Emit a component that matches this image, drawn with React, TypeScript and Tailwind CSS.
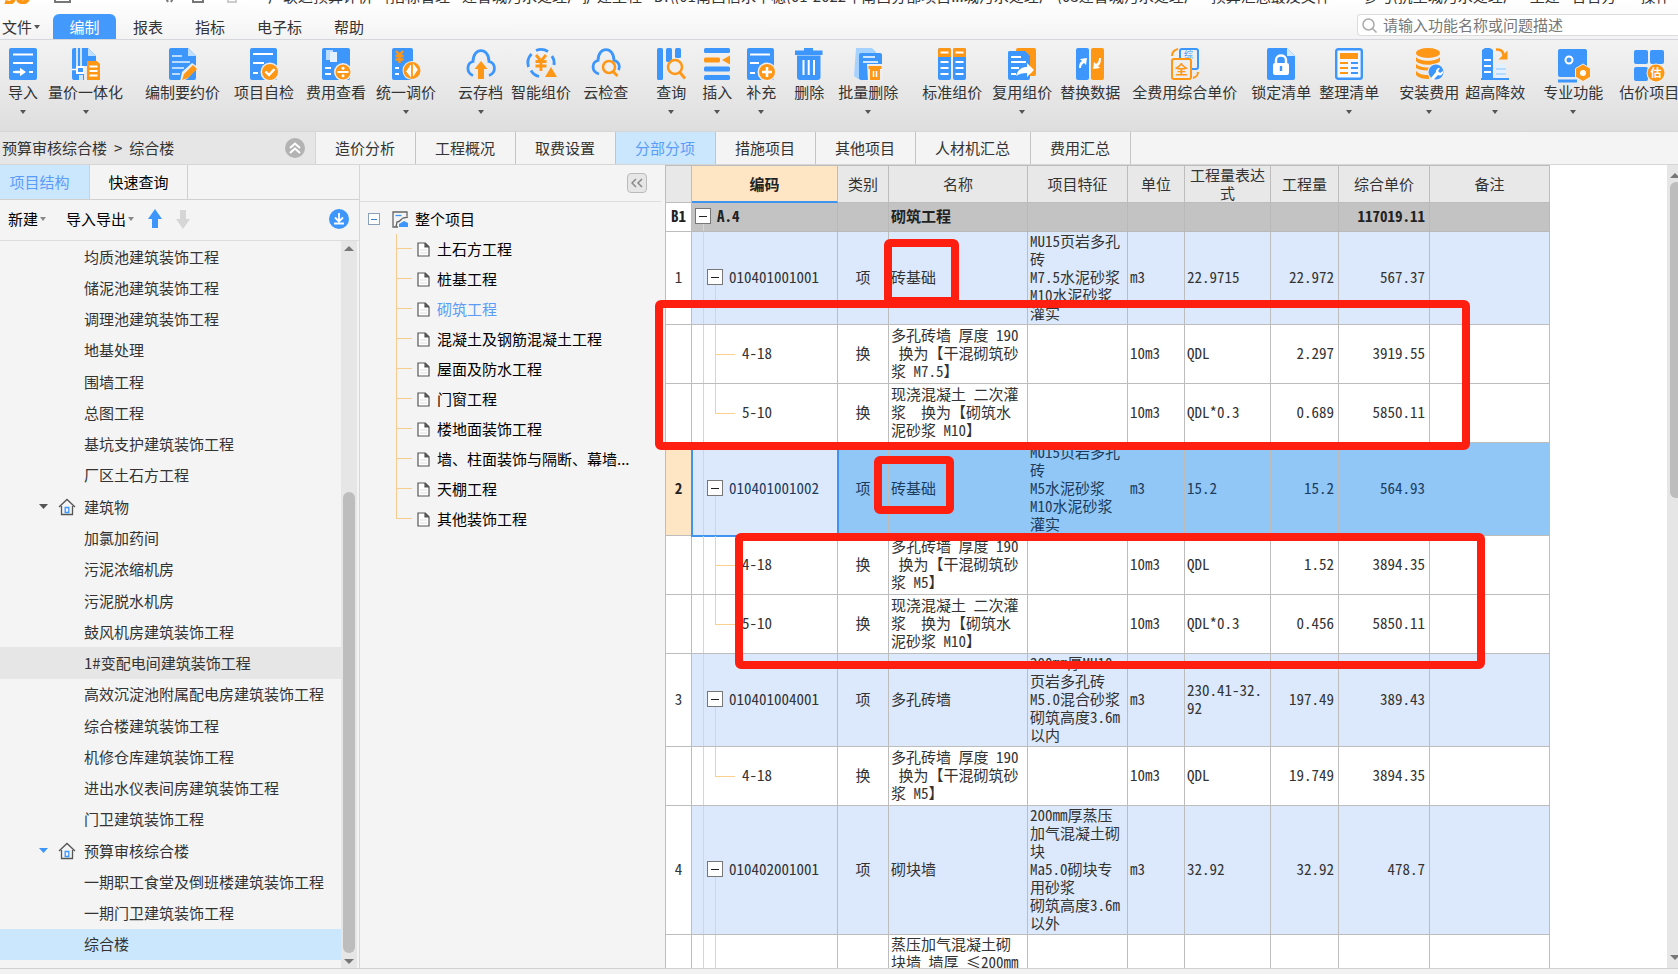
import { useState } from "react";
import type { ReactNode } from "react";

const B = "#3d96fc";
const O = "#ff9716";

const icons: Record<string, ReactNode> = {
  import: (
    <>
      <rect width="28" height="32" rx="2" fill={B} />
      <path d="M4 6.500h20M4 15h20M20 24h4M4 24h2" stroke="#fff" strokeWidth="2.200" />
      <path d="M6 22.800h5v-3l6 4.200-6 4.200v-3H6z" fill="#fff" />
    </>
  ),
  quantity: (
    <>
      <path d="M2 0h14l8 8v10H12v14H2a2 2 0 0 1-2-2V2a2 2 0 0 1 2-2z" fill={B} />
      <path d="M16 0l8 8h-8z" fill="#bfe0ff" />
      <path d="M5 0v18M9 0v18M0 21.500h13M8 27v5M10 27v5" stroke="#fff" strokeWidth="1.500" />
      <path d="M4 18h8v8H4z" fill="#fff" />
      <path d="M6 20h5v4H6z" fill={B} />
      <path d="M15 13h10l3 3v16H15z" fill={O} />
      <path d="M17.500 18.500h8M17.500 23h8M17.500 27.500h8" stroke="#fff" strokeWidth="2" />
    </>
  ),
  compile: (
    <>
      <path d="M2 0h17l8 8v22a2 2 0 0 1-2 2H2a2 2 0 0 1-2-2V2a2 2 0 0 1 2-2z" fill={B} />
      <path d="M19 0l8 8h-8z" fill="#bfe0ff" />
      <path d="M3 8h10M3 14h18M3 20h12M3 26h8" stroke="#b9dcff" strokeWidth="2" />
      <path d="M11 34l2-10 10-9 6 4-11 12z" fill="#eee" />
      <path d="M13 32l2-6 9-9 4 4-9 9z" fill={O} />
    </>
  ),
  check: (
    <>
      <rect width="27" height="32" rx="2" fill={B} />
      <path d="M3 6h20M3 15h11M3 25h5" stroke="#fff" strokeWidth="2" />
      <circle cx="20" cy="24" r="9.500" fill="#eee" />
      <circle cx="20" cy="24" r="8" fill={O} />
      <path d="M15.500 23.500l3.500 3.500 5.500-6" stroke="#fff" strokeWidth="2.400" fill="none" />
    </>
  ),
  fee: (
    <>
      <rect width="28" height="32" rx="2" fill={B} />
      <path d="M4 2h7v10H4z" fill="#b9dcff" />
      <path d="M8 4h7v10H8z" fill="#e4f2ff" />
      <path d="M3 20h6M3 26h6" stroke="#fff" strokeWidth="2" />
      <circle cx="21" cy="24" r="9" fill="#eee" />
      <circle cx="21" cy="24" r="7.500" fill={O} />
      <path d="M15.500 24h11" stroke="#fff" strokeWidth="2" />
      <circle cx="21" cy="20.300" r="1.500" fill="#fff" />
      <circle cx="21" cy="27.700" r="1.500" fill="#fff" />
    </>
  ),
  adjust: (
    <>
      <rect width="21" height="32" rx="2" fill={B} />
      <path d="M4 3l3.500 4L11 3M7.500 6v9M3.500 8h8M3.500 11.500h8" stroke={O} strokeWidth="2.400" fill="none" />
      <path d="M3 20h4M3 26h4" stroke="#fff" strokeWidth="2" />
      <circle cx="20" cy="22.500" r="9.500" fill="#eee" />
      <circle cx="20" cy="22.500" r="8.500" fill={O} />
      <path d="M18.500 17v11l-4-5M21.500 28V17l4 5" fill="#fff" stroke="#fff" strokeWidth="1.200" />
    </>
  ),
  cloudSave: (
    <>
      <path d="M6 27.500C-1 25-.5 15 6 13.500 6-1 22-1 22 13.500c7 1.500 7.500 11.500 0 14" fill="none" stroke={B} strokeWidth="2.800" />
      <path d="M14 13l6.500 8H17v10h-6V21H7.500z" fill={O} />
    </>
  ),
  smart: (
    <>
      <path d="M9 2.500a13 13 0 0 1 12 1M25 8a13 13 0 0 1 2 9M1.500 19a13 13 0 0 1 3-13M12 28.500a13 13 0 0 1-8-6" fill="none" stroke={B} strokeWidth="2.800" />
      <path d="M9 7l5 6 5-6M14 12v11M8.500 13.500h11M8.500 18h11" fill="none" stroke={O} strokeWidth="2.800" />
      <path d="M24 19l6 10H18z" fill={O} />
    </>
  ),
  cloudCheck: (
    <>
      <path d="M7 26C-1 24-.5 14 6 12.500 6-2 22-2 22 12.500c5 1 6.500 6 4.500 9.500" fill="none" stroke={B} strokeWidth="2.800" />
      <circle cx="17" cy="19" r="6" fill="#eee" stroke={O} strokeWidth="2.500" />
      <path d="M21 23.500l4.500 4.500" stroke={O} strokeWidth="2.800" />
    </>
  ),
  query: (
    <>
      <rect width="6" height="32" rx="1.500" fill={B} />
      <rect x="9" width="6" height="14" rx="1.500" fill={B} />
      <rect x="18" width="6" height="10" rx="1.500" fill={B} />
      <circle cx="18" cy="19" r="7" fill="#eee" stroke={O} strokeWidth="2.500" />
      <path d="M23 24.500l5 6" stroke={O} strokeWidth="2.800" />
    </>
  ),
  insert: (
    <>
      <rect x="1" width="26" height="5" rx="1.500" fill={B} />
      <rect x="1" y="9.500" width="16" height="5" rx="1.500" fill={O} />
      <path d="M27 7.500v9L19 12z" fill={O} />
      <rect x="1" y="18.500" width="26" height="5" rx="1.500" fill={B} />
      <rect x="1" y="27" width="26" height="5" rx="1.500" fill={B} />
    </>
  ),
  add: (
    <>
      <rect width="27" height="32" rx="2" fill={B} />
      <path d="M3 6.500h20M3 15h9M3 25h5" stroke="#fff" strokeWidth="2" />
      <circle cx="20" cy="24" r="9.500" fill="#eee" />
      <circle cx="20" cy="24" r="8" fill={O} />
      <path d="M15 24h10M20 19v10" stroke="#fff" strokeWidth="2.600" />
    </>
  ),
  remove: (
    <>
      <path d="M9 0h9v2.500h9.500V7H0V2.500h9zM2 7.500h23.500V29a3 3 0 0 1-3 3H5a3 3 0 0 1-3-3z" fill={B} />
      <path d="M8.500 12v15M13.700 12v15M19 12v15" stroke="#fff" strokeWidth="2" />
    </>
  ),
  batch: (
    <>
      <path d="M2 0h16l4 4v27H4l-4-3z" fill="#a6d2ff" />
      <rect x="5" y="5" width="23" height="27" rx="2" fill={B} />
      <path d="M9 9h12M9 14h15" stroke="#cfe6ff" strokeWidth="2" />
      <path d="M13 16h16v17H14z" fill="#eee" />
      <path d="M14.500 18h13v3h-13zM16 21h10v11H16z" fill={O} />
      <path d="M19.500 23v6M22.500 23v6" stroke="#fff" strokeWidth="1.500" />
    </>
  ),
  standard: (
    <>
      <rect width="13" height="32" rx="2" fill={B} />
      <rect x="15" width="13" height="32" rx="2" fill={B} />
      <path d="M0 9V2a2 2 0 0 1 2-2h9a2 2 0 0 1 2 2v7zM15 9V2a2 2 0 0 1 2-2h9a2 2 0 0 1 2 2v7z" fill={O} />
      <path d="M2.500 4.500h8M17.500 4.500h8M2.500 14h8M17.500 14h8M2.500 20h8M17.500 20h8M2.500 26h8M17.500 26h8" stroke="#fff" strokeWidth="2" />
    </>
  ),
  reuse: (
    <>
      <rect x="8" width="20" height="28" rx="2" fill={O} />
      <path d="M1 3h16l5 5v22a2 2 0 0 1-2 2H2a2 2 0 0 1-2-2V4z" fill={B} />
      <path d="M3 9h10M3 14h15M3 20h8M3 26h5" stroke="#fff" strokeWidth="2" />
      <path d="M8 28c2-7 6-9 11-9v-4l7 7-7 7v-4c-5 0-8 1-11 3z" fill="#fff" />
    </>
  ),
  swap: (
    <>
      <rect width="13" height="32" rx="2" fill={B} />
      <rect x="15" width="13" height="32" rx="2" fill={O} />
      <path d="M3 20c0-4 1-6 3-7l-2-2 7-1-1 7-2-2c-2 1-3 3-3 5zM25 10c0 4-1 7-3 8l2 2-7 1 1-7 2 2c2-1 3-3 3-6z" fill="#fff" />
    </>
  ),
  full: (
    <>
      <path d="M1 8c0-4 2-6 6-7M27 24c0 4-2 5-5 6" stroke={O} strokeWidth="2" fill="none" />
      <rect x="9" y="1" width="18" height="20" rx="2" fill="#eee" stroke={B} strokeWidth="2" />
      <text x="13" y="9.500" fontSize="9" fill={B}>综</text>
      <rect x="1" y="11" width="19" height="20" rx="2" fill="#eee" stroke={O} strokeWidth="2" />
      <text x="4" y="26" fontSize="13" fontWeight="bold" fill={O}>全</text>
    </>
  ),
  lock: (
    <>
      <path d="M2 0h18l8 8v22a2 2 0 0 1-2 2H2a2 2 0 0 1-2-2V2a2 2 0 0 1 2-2z" fill={B} />
      <path d="M20 0l8 8h-8z" fill="#d4eaff" />
      <path d="M9 16v-4c0-6 10-6 10 0v4" fill="none" stroke="#fff" strokeWidth="2.400" />
      <rect x="6" y="15" width="16" height="12" rx="2" fill="#fff" />
      <path d="M14 18v5" stroke={B} strokeWidth="2.400" />
    </>
  ),
  tidy: (
    <>
      <rect x="1.200" y="1.200" width="25.600" height="29.600" rx="2" fill="#f4f8ff" stroke={B} strokeWidth="2.400" />
      <rect x="5" y="5" width="18" height="6" fill={O} />
      <path d="M5 15h8M5 20h8M5 25h8" stroke={O} strokeWidth="2.200" />
      <path d="M16 15h7M16 20h7M16 25h7" stroke={B} strokeWidth="2.200" />
    </>
  ),
  install: (
    <>
      <ellipse cx="13" cy="5" rx="12" ry="5" fill={O} />
      <path d="M1 9c4 5 20 5 24 0v4c-4 5-20 5-24 0zM1 16c4 4 16 5 20 1v4c-5 2-16 2-20-1zM1 23c4 4 8 4 13 4v4c-6 0-10-1-13-4z" fill={O} />
      <circle cx="21" cy="24" r="8.500" fill="#eee" />
      <circle cx="21" cy="24" r="7.500" fill={B} />
      <path d="M16 30l5-6a3.500 3.500 0 0 1 4-4l-2 3 2 2 3-2a3.500 3.500 0 0 1-5 4l-5 5z" fill="#fff" />
    </>
  ),
  height: (
    <>
      <path d="M1 2l3-2h5l3 2v28H1z" fill={B} />
      <path d="M3 12h7M3 18h7M3 24h7" stroke="#fff" strokeWidth="2" />
      <path d="M15 16h10v14H15z" fill="#e3f1ff" />
      <path d="M15 21h10M15 26h10" stroke="#a9d4ff" strokeWidth="1.500" />
      <path d="M0 31h28" stroke={B} strokeWidth="2" />
      <path d="M15 1.500c5 0 7 1 7.500 6" fill="none" stroke={O} strokeWidth="2.600" />
      <path d="M17.500 11.500h9v-9z" fill={O} />
    </>
  ),
  pro: (
    <>
      <rect x="-1" y="1" width="29" height="28" rx="2" fill={B} />
      <path d="M-1 33h19" stroke={B} strokeWidth="3" />
      <circle cx="10" cy="12" r="3.500" fill="none" stroke="#fff" strokeWidth="2" />
      <path d="M24 16l7.500 4.500v8.500L24 33.500 16.500 29v-8.500z" fill={O} stroke="#eee" />
      <circle cx="24" cy="25" r="3" fill="#fff" />
    </>
  ),
  estimate: (
    <>
      <rect x="-1" y="2" width="14" height="14" rx="2" fill={B} />
      <rect x="15" y="2" width="14" height="14" rx="2" fill={B} />
      <rect x="-1" y="19" width="14" height="14" rx="2" fill={B} />
      <circle cx="21" cy="25" r="9.500" fill="#eee" />
      <circle cx="21" cy="25" r="8.500" fill={O} />
      <text x="15.500" y="29" fontSize="11" fontWeight="bold" fill="#fff">估</text>
    </>
  ),
};

type Tool = { icon: string; label: string; gap: string; menu?: boolean };

const tools: Tool[] = [
  { icon: "import", label: "导入", gap: "ml-2", menu: true },
  { icon: "quantity", label: "量价一体化", gap: "ml-2.5", menu: true },
  { icon: "compile", label: "编制要约价", gap: "ml-5.5" },
  { icon: "check", label: "项目自检", gap: "ml-3.5" },
  { icon: "fee", label: "费用查看", gap: "ml-3" },
  { icon: "adjust", label: "统一调价", gap: "ml-2.5", menu: true },
  { icon: "cloudSave", label: "云存档", gap: "ml-5.5", menu: true },
  { icon: "smart", label: "智能组价", gap: "ml-2" },
  { icon: "cloudCheck", label: "云检查", gap: "ml-3" },
  { icon: "query", label: "查询", gap: "ml-7", menu: true },
  { icon: "insert", label: "插入", gap: "ml-4", menu: true },
  { icon: "add", label: "补充", gap: "ml-3.5", menu: true },
  { icon: "remove", label: "删除", gap: "ml-4.5" },
  { icon: "batch", label: "批量删除", gap: "ml-3.5", menu: true },
  { icon: "standard", label: "标准组价", gap: "ml-6" },
  { icon: "reuse", label: "复用组价", gap: "ml-2.5", menu: true },
  { icon: "swap", label: "替换数据", gap: "ml-2" },
  { icon: "full", label: "全费用综合单价", gap: "ml-3" },
  { icon: "lock", label: "锁定清单", gap: "ml-3.5" },
  { icon: "tidy", label: "整理清单", gap: "ml-2", menu: true },
  { icon: "install", label: "安装费用", gap: "ml-5", menu: true },
  { icon: "height", label: "超高降效", gap: "ml-1.5", menu: true },
  { icon: "pro", label: "专业功能", gap: "ml-4.5", menu: true },
  { icon: "estimate", label: "估价项目", gap: "ml-4" },
];

const menus = ["报表", "指标", "电子标", "帮助"];
const tabs = ["造价分析", "工程概况", "取费设置", "分部分项", "措施项目", "其他项目", "人材机汇总", "费用汇总"];

type Node = { name: string; group?: boolean; color?: string; bg?: string };

const projectTree: Node[] = [
  { name: "均质池建筑装饰工程" },
  { name: "储泥池建筑装饰工程" },
  { name: "调理池建筑装饰工程" },
  { name: "地基处理" },
  { name: "围墙工程" },
  { name: "总图工程" },
  { name: "基坑支护建筑装饰工程" },
  { name: "厂区土石方工程" },
  { name: "建筑物", group: true, color: "text-[#555]" },
  { name: "加氯加药间" },
  { name: "污泥浓缩机房" },
  { name: "污泥脱水机房" },
  { name: "鼓风机房建筑装饰工程" },
  { name: "1#变配电间建筑装饰工程", bg: "bg-[#e6e6e6]" },
  { name: "高效沉淀池附属配电房建筑装饰工程" },
  { name: "综合楼建筑装饰工程" },
  { name: "机修仓库建筑装饰工程" },
  { name: "进出水仪表间房建筑装饰工程" },
  { name: "门卫建筑装饰工程" },
  { name: "预算审核综合楼", group: true, color: "text-[#3d96fc]" },
  { name: "一期职工食堂及倒班楼建筑装饰工程" },
  { name: "一期门卫建筑装饰工程" },
  { name: "综合楼", bg: "bg-[#cbe7fe]" },
];

const sections = [
  "土石方工程",
  "桩基工程",
  "砌筑工程",
  "混凝土及钢筋混凝土工程",
  "屋面及防水工程",
  "门窗工程",
  "楼地面装饰工程",
  "墙、柱面装饰与隔断、幕墙...",
  "天棚工程",
  "其他装饰工程",
];

const columns = [
  { name: "", width: "w-[26px]" },
  { name: "编码", width: "w-[146px]" },
  { name: "类别", width: "w-[51px]" },
  { name: "名称", width: "w-[139px]" },
  { name: "项目特征", width: "w-[100px]" },
  { name: "单位", width: "w-[57px]" },
  { name: "工程量表达式", width: "w-[86px]" },
  { name: "工程量", width: "w-[68px]" },
  { name: "综合单价", width: "w-[91px]" },
  { name: "备注", width: "w-[120px]" },
];

type Row = {
  no?: string;
  kind: "item" | "sub" | "last" | "open";
  height: string;
  code: string;
  type: string;
  name: string;
  feature?: string;
  unit: string;
  expr: string;
  qty: string;
  price: string;
  selected?: boolean;
};

const rows: Row[] = [
  { no: "1", kind: "item", height: "h-[93px]", code: "010401001001", type: "项", name: "砖基础", feature: "MU15页岩多孔\n砖\nM7.5水泥砂浆\nM10水泥砂浆\n灌实", unit: "m3", expr: "22.9715", qty: "22.972", price: "567.37" },
  { kind: "sub", height: "h-[59px]", code: "4-18", type: "换", name: "多孔砖墙 厚度 190\n 换为【干混砌筑砂\n浆 M7.5】", unit: "10m3", expr: "QDL", qty: "2.297", price: "3919.55" },
  { kind: "last", height: "h-[59px]", code: "5-10", type: "换", name: "现浇混凝土 二次灌\n浆  换为【砌筑水\n泥砂浆 M10】", unit: "10m3", expr: "QDL*0.3", qty: "0.689", price: "5850.11" },
  { no: "2", kind: "item", height: "h-[93px]", code: "010401001002", type: "项", name: "砖基础", feature: "MU15页岩多孔\n砖\nM5水泥砂浆\nM10水泥砂浆\n灌实", unit: "m3", expr: "15.2", qty: "15.2", price: "564.93", selected: true },
  { kind: "sub", height: "h-[59px]", code: "4-18", type: "换", name: "多孔砖墙 厚度 190\n 换为【干混砌筑砂\n浆 M5】", unit: "10m3", expr: "QDL", qty: "1.52", price: "3894.35" },
  { kind: "last", height: "h-[59px]", code: "5-10", type: "换", name: "现浇混凝土 二次灌\n浆  换为【砌筑水\n泥砂浆 M10】", unit: "10m3", expr: "QDL*0.3", qty: "0.456", price: "5850.11" },
  { no: "3", kind: "item", height: "h-[93px]", code: "010401004001", type: "项", name: "多孔砖墙", feature: "200mm厚MU10\n页岩多孔砖\nM5.0混合砂浆\n砌筑高度3.6m\n以内", unit: "m3", expr: "230.41-32.\n92", qty: "197.49", price: "389.43" },
  { kind: "last", height: "h-[59px]", code: "4-18", type: "换", name: "多孔砖墙 厚度 190\n 换为【干混砌筑砂\n浆 M5】", unit: "10m3", expr: "QDL", qty: "19.749", price: "3894.35" },
  { no: "4", kind: "item", height: "h-[129px]", code: "010402001001", type: "项", name: "砌块墙", feature: "200mm厚蒸压\n加气混凝土砌\n块\nMa5.0砌块专\n用砂浆\n砌筑高度3.6m\n以外", unit: "m3", expr: "32.92", qty: "32.92", price: "478.7" },
  { kind: "open", height: "h-[59px]", code: "", type: "", name: "蒸压加气混凝土砌\n块墙 墙厚 ≤200mm", unit: "", expr: "", qty: "", price: "" },
];

// red marks drawn over the grid
const marks = [
  "left-[219px] top-[74px] h-[66px] w-[75px]",
  "left-[-10px] top-[135px] h-[150px] w-[815px]",
  "left-[209px] top-[291px] h-[58px] w-[80px]",
  "left-[70px] top-[368px] h-[136px] w-[750px]",
];

function Caret({ className = "text-[#555]" }: { className?: string }) {
  return (
    <svg width="6" height="4" viewBox="0 0 6 4" className={className}>
      <path d="M0 0h6L3 4z" fill="currentColor" />
    </svg>
  );
}

function ScrollArrow({ up = false }: { up?: boolean }) {
  return (
    <svg width="10" height="5" viewBox="0 0 10 5" className="shrink-0 text-[#777]">
      <path d={up ? "M0 5h10L5 0z" : "M0 0h10L5 5z"} fill="currentColor" />
    </svg>
  );
}

function TitleBar() {
  return (
    <div className="flex h-1 items-end overflow-hidden text-[15px] leading-4 whitespace-pre text-[#333]">
      <svg width="30" height="16" viewBox="0 0 30 16" className="ml-1 shrink-0">
        <path d="M1 14c6 2 10 0 9-8M15 4c-1 6-2 9 2 10s8-1 7-7" fill="none" stroke={O} strokeWidth="4" />
      </svg>
      <svg width="190" height="16" viewBox="0 0 190 16" className="ml-5 shrink-0" fill="none" stroke="#777" strokeWidth="2">
        <path d="M1 4v10h15V4M109 4l5 10M122 4l-5 10M139 4v10h10V4" />
        <path d="M166 4v7h8v3h8V6" stroke="#ccc" />
      </svg>
      <span className="ml-6 shrink-0">广联达预算评价 - [招标管理 - 迁曹城污水处理厂扩建工程 - D:\(01南昌信水平稳(01-2022年南昌分部项目...城污水处理厂 (03迁曹城污水处理厂 - 预算汇总最及文件</span>
      <span className="ml-8 shrink-0">参与(抗至城污水处理厂 - 土建 - 合官方</span>
      <span className="ml-6 shrink-0">操作</span>
    </div>
  );
}

function MenuBar() {
  return (
    <div className="mt-2.5 flex h-[26px] items-stretch border-b border-[#d4d8dc]">
      <button className="flex w-[53px] items-center gap-0.5 pl-0.5">
        文件
        <Caret />
      </button>
      <button className="w-[63px] rounded-t-md bg-[#4499fc] text-white">编制</button>
      {menus.map((m) => (
        <button key={m} className="ml-0.5 px-[15px]">
          {m}
        </button>
      ))}
      <label className="mb-[3px] ml-auto flex w-[321px] items-center gap-1.5 rounded-l-sm border border-r-0 border-[#dcdcdc] bg-white pl-1">
        <svg width="15" height="15" viewBox="0 0 15 15" fill="none" stroke="#aaa" strokeWidth="1.500">
          <circle cx="6.500" cy="6.500" r="5.500" />
          <path d="M10.500 10.500l4 4" />
        </svg>
        <input
          aria-label="搜索功能"
          placeholder="请输入功能名称或问题描述"
          className="h-5 min-w-0 flex-1 bg-transparent outline-none placeholder:text-[#777]"
        />
      </label>
    </div>
  );
}

function Ribbon() {
  return (
    <div className="flex h-[91px] shrink-0 overflow-hidden bg-linear-to-b from-[#f3f3f3] to-[#dedede] pt-2">
      {tools.map((t) => (
        <button key={t.label} className={`flex shrink-0 flex-col items-center whitespace-nowrap ${t.gap}`}>
          <svg width="28" height="32" viewBox="0 0 28 32" className="overflow-visible">
            {icons[t.icon]}
          </svg>
          <span className="mt-0.5 leading-5">{t.label}</span>
          {t.menu && (
            <span className="mt-2 leading-none">
              <Caret />
            </span>
          )}
        </button>
      ))}
    </div>
  );
}

function TabBar({ active, onSelect }: { active: string; onSelect: (t: string) => void }) {
  return (
    <div className="flex h-[34px] shrink-0 border-y border-[#d6d6d6] bg-[#f4f4f4]">
      <div className="flex w-[316px] items-center border-r border-[#d6d6d6] bg-[#e6e6e6] pr-2.5 pl-0.5">
        <span>预算审核综合楼</span>
        <span className="mx-[7px]">&gt;</span>
        <span>综合楼</span>
        <button aria-label="收起" className="ml-auto">
          <svg width="20" height="20" viewBox="0 0 20 20" fill="none" stroke="#fff" strokeWidth="2">
            <circle cx="10" cy="10" r="10" fill="#b3b3b3" stroke="none" />
            <path d="M5 10l5-4.500 5 4.500M5 15l5-4.500 5 4.500" />
          </svg>
        </button>
      </div>
      {tabs.map((t) => (
        <button
          key={t}
          onClick={() => onSelect(t)}
          className={`border-r border-[#c4c4c4] pr-5 pl-[19px] ${t === active ? "bg-[#cbe7fe] text-[#5a9cf8]" : ""}`}
        >
          {t}
        </button>
      ))}
    </div>
  );
}

function House() {
  return (
    <svg width="18" height="18" viewBox="0 0 18 18" fill="none" stroke="#555" strokeWidth="1.300">
      <path d="M1 9l8-7.500L17 9M3.500 8v8.500h11V8" />
      <path d="M7.200 9.500h3.600v5H7.200z" stroke={B} />
    </svg>
  );
}

function ProjectPanel() {
  return (
    <aside className="flex w-[360px] shrink-0 flex-col border-r border-[#d6d6d6]">
      <div className="flex h-[35px] shrink-0 border-b border-[#d0d0d0]">
        <button className="w-[90px] border-r border-[#d0d0d0] bg-[#cbe7fe] pr-2.5 text-[#5a9cf8]">项目结构</button>
        <button className="w-[98px] border-r border-[#d0d0d0] text-black">快速查询</button>
      </div>
      <div className="flex h-[41px] shrink-0 items-center border-b border-[#dcdcdc] pr-2.5 pb-0.5 pl-2 text-black">
        <button className="flex items-center gap-0.5">
          新建 <Caret className="text-[#888]" />
        </button>
        <button className="ml-5 flex items-center gap-0.5">
          导入导出 <Caret className="text-[#888]" />
        </button>
        <button aria-label="上移" className="ml-3.5">
          <svg width="14" height="20" viewBox="0 0 14 20" fill={B}>
            <path d="M7 0l7 10h-4v9H4v-9H0z" />
          </svg>
        </button>
        <button aria-label="下移" className="ml-3.5">
          <svg width="14" height="20" viewBox="0 0 14 20" fill="#d6d6d6">
            <path d="M7 20l7-10h-4V1H4v9H0z" />
          </svg>
        </button>
        <button aria-label="定位" className="ml-auto">
          <svg width="20" height="20" viewBox="0 0 20 20" fill="none" stroke="#fff" strokeWidth="1.800">
            <circle cx="10" cy="10" r="10" fill={B} stroke="none" />
            <path d="M10 4v8M6 8.500l4 4 4-4M5 14.500h10" />
          </svg>
        </button>
      </div>
      <div className="flex min-h-0 flex-1">
        <ul className="flex min-w-0 flex-1 flex-col pb-2">
          {projectTree.map((n) => (
            <li key={n.name} className={`flex flex-1 items-center ${n.bg ?? ""}`}>
              <span className="flex w-[84px] shrink-0 items-center justify-end gap-2.5 pr-2">
                {n.group && (
                  <>
                    <svg width="9" height="5" viewBox="0 0 9 5" className={n.color}>
                      <path d="M0 0h9L4.500 5z" fill="currentColor" />
                    </svg>
                    <House />
                  </>
                )}
              </span>
              <span className="truncate">{n.name}</span>
            </li>
          ))}
        </ul>
        <div className="mr-0.5 flex w-4 flex-col items-center bg-[#e6e6e6] pt-[5px] pb-1">
          <ScrollArrow up />
          <div className="mt-auto h-[461px] w-3 rounded-full bg-[#bdbdbd]" />
          <div className="mt-1.5">
            <ScrollArrow />
          </div>
        </div>
      </div>
    </aside>
  );
}

function SectionPanel() {
  return (
    <aside className="w-[305px] shrink-0 text-black">
      <div className="mr-1 flex h-[37px] items-center justify-end border-b border-[#dcdcdc] pr-3.5">
        <button aria-label="折叠" className="flex h-5 w-5 items-center justify-center rounded-sm border border-[#bbb] bg-[#e6e6e6]">
          <svg width="12" height="10" viewBox="0 0 12 10" fill="none" stroke="#888" strokeWidth="1.500">
            <path d="M5 1L1 5l4 4M11 1L7 5l4 4" />
          </svg>
        </button>
      </div>
      <div className="mt-0.5 flex h-[30px] items-center pl-2">
        <button aria-label="展开整个项目" className="flex h-3 w-3 items-center justify-center border border-[#8a9fb8] bg-white">
          <span className="h-px w-1.5 bg-[#3d7ed0]" />
        </button>
        <svg width="17" height="17" viewBox="0 0 17 17" fill="none" stroke="#666" strokeWidth="1.300" className="ml-3">
          <path d="M15 5V1H1v15h5" />
          <path d="M3.500 4.500h6" stroke={B} />
          <path d="M4 16l1-5c3 0 4-3 6-4l5-1" />
          <path d="M7 16v-3l5-3 4 2v4z" fill={B} stroke="none" />
        </svg>
        <span className="ml-1.5">整个项目</span>
      </div>
      <ul>
        {sections.map((s, i) => (
          <li key={s} className="flex h-[30px] items-center pl-9">
            <span className="flex h-[30px] w-4 flex-col">
              <span className="h-[15px] border-b border-l border-[#f6cd8e]" />
              {i < sections.length - 1 && <span className="h-[15px] border-l border-[#f6cd8e]" />}
            </span>
            <svg width="13" height="15" viewBox="0 0 13 15" fill="none" stroke="#555" strokeWidth="1.200" className="ml-[5px]">
              <path d="M1 1h7l4 4v9H1z" fill="#fff" />
              <path d="M8 1v4h4M8 1l4 4" fill="#555" />
              <path d="M3 8h7M3 11h7" stroke="#ddd" />
            </svg>
            <span className={`ml-[7px] ${s === "砌筑工程" ? "text-[#5a9cf8]" : ""}`}>{s}</span>
          </li>
        ))}
      </ul>
    </aside>
  );
}

function Toggle({ label }: { label: string }) {
  return (
    <button aria-label={label} className="flex h-4 w-4 shrink-0 items-center justify-center border border-[#777] bg-white">
      <span className="h-px w-2 bg-[#222]" />
    </button>
  );
}

function CodeCell({ row }: { row: Row }) {
  const line = "absolute border-[#fbcf8d]";
  return (
    <td className={`relative border-r border-b border-[#bdbdbd] pb-0.5 ${row.selected ? "bg-[#dce9fc] outline-2 -outline-offset-1 outline-[#4193f0]" : ""}`}>
      <span className={`${line} inset-y-0 left-[11px] border-l`} />
      {row.kind === "item" && <span className={`${line} top-1/2 bottom-0 left-[23px] border-l`} />}
      {(row.kind === "sub" || row.kind === "open") && <span className={`${line} inset-y-0 left-[23px] border-l`} />}
      {row.kind === "last" && <span className={`${line} top-0 bottom-1/2 left-[23px] border-l`} />}
      {(row.kind === "sub" || row.kind === "last") && <span className={`${line} top-1/2 left-[23px] w-5 border-t`} />}
      {row.kind === "item" ? (
        <span className="relative flex items-center gap-1.5 pl-[15px]">
          <Toggle label={`收起 ${row.code}`} />
          {row.code}
        </span>
      ) : (
        <span className="block pl-[50px]">{row.code}</span>
      )}
    </td>
  );
}

function CostGrid() {
  const cell = "border-r border-b border-[#bdbdbd] pb-0.5";
  const groupCell = "border-r border-b border-[#b9b9b9] pb-0.5";
  return (
    <section className="relative min-w-0 flex-1">
      <div className="flex h-full overflow-hidden bg-white">
        <div className="min-w-0 flex-1 overflow-hidden">
          <table className="table-fixed border-separate border-spacing-0 border-t border-l border-[#bdbdbd] leading-[18px] text-[#333] [font-feature-settings:'hwid']">
            <thead>
              <tr className="h-9 bg-[#e8e8e8]">
                {columns.map((c) => (
                  <th
                    key={c.name}
                    scope="col"
                    className={`${c.width} border-r p-0 ${
                      c.name === "编码" ? "border-b-2 border-[#bdbdbd] border-b-[#4193f0] bg-[#fee5c4] font-bold text-[#222]" : "border-b border-[#bdbdbd] font-normal"
                    }`}
                  >
                    {c.name}
                  </th>
                ))}
              </tr>
            </thead>
            <tbody>
              <tr className="h-[29px] bg-[#c3c3c3] font-bold text-[#222]">
                <td className={`${cell} bg-white text-center`}>B1</td>
                <td className={`${groupCell} relative`}>
                  <span className="absolute top-1/2 bottom-0 left-[11px] border-l border-[#fbcf8d]" />
                  <span className="relative flex items-center gap-1.5 pl-[3px]">
                    <Toggle label="收起 A.4" />
                    A.4
                  </span>
                </td>
                <td className={groupCell} />
                <td className={`${groupCell} px-0.5`}>砌筑工程</td>
                <td className={groupCell} />
                <td className={groupCell} />
                <td className={groupCell} />
                <td className={groupCell} />
                <td className={`${groupCell} pr-1 text-right`}>117019.11</td>
                <td className={groupCell} />
              </tr>
              {rows.map((r, i) => (
                <tr
                  key={i}
                  className={`${r.height} whitespace-pre ${r.selected ? "bg-[#90c7f7] text-[#1d3c5c]" : r.kind === "item" ? "bg-[#dce9fc]" : "bg-white"}`}
                >
                  <td className={`${cell} text-center ${r.selected ? "bg-[#fee5c4] font-bold text-[#222]" : "bg-white"}`}>{r.no}</td>
                  <CodeCell row={r} />
                  <td className={`${cell} text-center`}>{r.type}</td>
                  <td className={`${cell} px-0.5 ${r.kind === "open" ? "align-top" : ""}`}>{r.name}</td>
                  <td className={`${cell} px-0.5`}>{r.feature}</td>
                  <td className={`${cell} px-0.5`}>{r.unit}</td>
                  <td className={`${cell} px-0.5`}>{r.expr}</td>
                  <td className={`${cell} pr-1 text-right`}>{r.qty}</td>
                  <td className={`${cell} pr-1 text-right`}>{r.price}</td>
                  <td className={cell} />
                </tr>
              ))}
            </tbody>
          </table>
        </div>
        <div className="flex w-[11px] shrink-0 flex-col overflow-hidden bg-[#e6e6e6] py-2 pl-[3px]">
          <ScrollArrow up />
          <div className="mt-1 h-[316px] w-3 rounded-full bg-[#bdbdbd]" />
          <div className="mt-auto">
            <ScrollArrow />
          </div>
        </div>
      </div>
      {marks.map((m) => (
        <div key={m} className={`pointer-events-none absolute rounded-md border-8 border-[#ff1f10] ${m}`} />
      ))}
    </section>
  );
}

export default function App() {
  const [tab, setTab] = useState("分部分项");
  return (
    <div className="flex h-screen flex-col overflow-hidden bg-[#f4f4f4] font-['Noto_Sans_CJK_SC',sans-serif] text-[15px] leading-5 text-[#333]">
      <header className="shrink-0 bg-linear-to-b from-white to-[#f3f3f3]">
        <TitleBar />
        <MenuBar />
      </header>
      <Ribbon />
      <TabBar active={tab} onSelect={setTab} />
      <main className="flex min-h-0 flex-1">
        <ProjectPanel />
        <SectionPanel />
        <CostGrid />
      </main>
      <footer className="h-1.5 shrink-0 border-t border-[#d0d0d0] bg-[#f2f2f2]" />
    </div>
  );
}
